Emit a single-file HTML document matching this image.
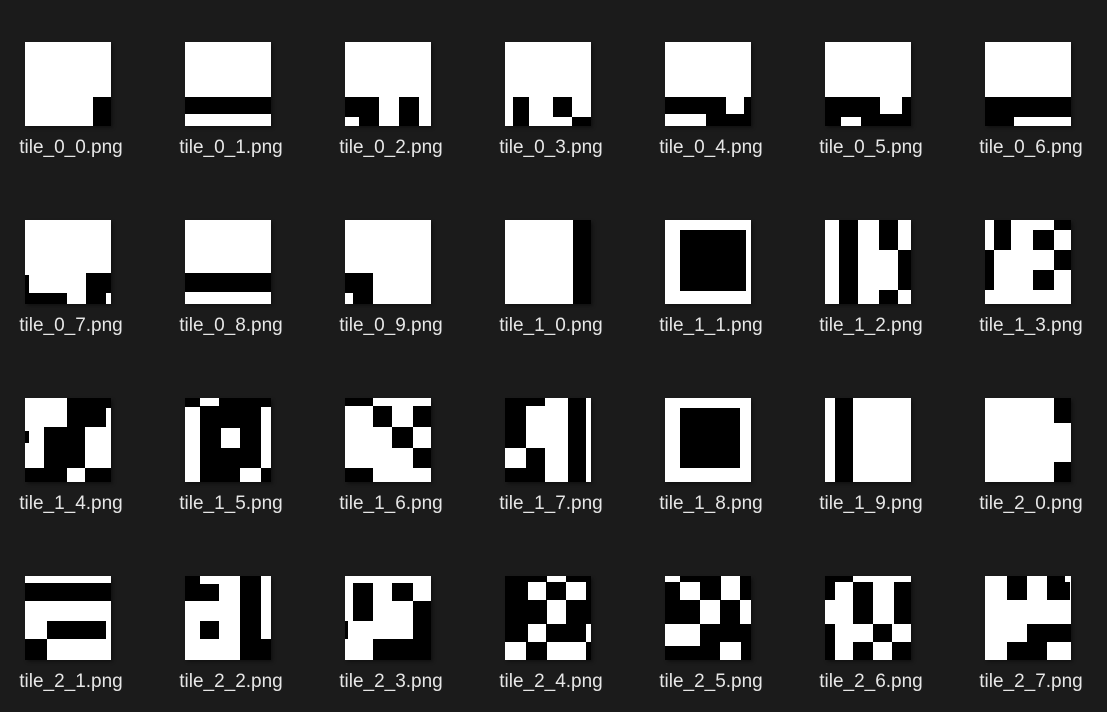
<!DOCTYPE html>
<html><head><meta charset="utf-8"><style>
html,body{margin:0;padding:0;background:#1b1b1b;width:1107px;height:712px;overflow:hidden;position:relative}
svg{position:absolute;width:86px;height:84px;box-shadow:2px 2px 3px rgba(0,0,0,.35)}
.l{position:absolute;width:160px;text-align:center;color:#e6e6e6;font:19px "Liberation Sans",sans-serif;line-height:22px;margin-left:3px;margin-top:1px}
</style></head><body>
<!-- Row 0 -->
<svg style="left:25px;top:42px" viewBox="0 0 86 84"><rect width="86" height="84" fill="#fff"/><rect x="68" y="55" width="18" height="29"/></svg>
<svg style="left:185px;top:42px" viewBox="0 0 86 84"><rect width="86" height="84" fill="#fff"/><rect x="0" y="55" width="86" height="17"/></svg>
<svg style="left:345px;top:42px" viewBox="0 0 86 84"><rect width="86" height="84" fill="#fff"/><rect x="0" y="55" width="34" height="29"/><rect x="0" y="75" width="14" height="9" fill="#fff"/><rect x="54" y="55" width="20" height="29"/></svg>
<svg style="left:505px;top:42px" viewBox="0 0 86 84"><rect width="86" height="84" fill="#fff"/><rect x="8" y="55" width="16" height="29"/><rect x="48" y="55" width="19" height="20"/><rect x="67" y="75" width="19" height="9"/></svg>
<svg style="left:665px;top:42px" viewBox="0 0 86 84"><rect width="86" height="84" fill="#fff"/><rect x="0" y="55" width="86" height="29"/><rect x="0" y="72" width="41" height="12" fill="#fff"/><rect x="61" y="55" width="18" height="17" fill="#fff"/></svg>
<svg style="left:825px;top:42px" viewBox="0 0 86 84"><rect width="86" height="84" fill="#fff"/><rect x="0" y="55" width="86" height="29"/><rect x="55" y="55" width="22" height="17" fill="#fff"/><rect x="16" y="75" width="20" height="9" fill="#fff"/></svg>
<svg style="left:985px;top:42px" viewBox="0 0 86 84"><rect width="86" height="84" fill="#fff"/><rect x="0" y="55" width="86" height="29"/><rect x="29" y="75" width="57" height="9" fill="#fff"/></svg>
<div class="l" style="left:-12px;top:136px">tile_0_0.png</div>
<div class="l" style="left:148px;top:136px">tile_0_1.png</div>
<div class="l" style="left:308px;top:136px">tile_0_2.png</div>
<div class="l" style="left:468px;top:136px">tile_0_3.png</div>
<div class="l" style="left:628px;top:136px">tile_0_4.png</div>
<div class="l" style="left:788px;top:136px">tile_0_5.png</div>
<div class="l" style="left:948px;top:136px">tile_0_6.png</div>
<!-- Row 1 -->
<svg style="left:25px;top:220px" viewBox="0 0 86 84"><rect width="86" height="84" fill="#fff"/><rect x="0" y="73" width="42" height="11"/><rect x="0" y="55" width="4" height="18"/><rect x="61" y="53" width="25" height="31"/><rect x="81" y="73" width="5" height="11" fill="#fff"/></svg>
<svg style="left:185px;top:220px" viewBox="0 0 86 84"><rect width="86" height="84" fill="#fff"/><rect x="0" y="53" width="86" height="19"/></svg>
<svg style="left:345px;top:220px" viewBox="0 0 86 84"><rect width="86" height="84" fill="#fff"/><rect x="0" y="53" width="28" height="31"/><rect x="0" y="73" width="8" height="11" fill="#fff"/></svg>
<svg style="left:505px;top:220px" viewBox="0 0 86 84"><rect width="86" height="84" fill="#fff"/><rect x="68" y="0" width="18" height="84"/></svg>
<svg style="left:665px;top:220px" viewBox="0 0 86 84"><rect width="86" height="84" fill="#fff"/><rect x="15" y="10" width="66" height="61"/></svg>
<svg style="left:825px;top:220px" viewBox="0 0 86 84"><rect width="86" height="84" fill="#fff"/><rect x="14" y="0" width="19" height="84"/><rect x="54" y="0" width="19" height="30"/><rect x="73" y="30" width="13" height="40"/><rect x="54" y="70" width="19" height="14"/></svg>
<svg style="left:985px;top:220px" viewBox="0 0 86 84"><rect width="86" height="84" fill="#fff"/><rect x="9" y="0" width="17" height="30"/><rect x="0" y="30" width="9" height="40"/><rect x="48" y="10" width="21" height="20"/><rect x="48" y="50" width="21" height="20"/><rect x="69" y="0" width="17" height="10"/><rect x="69" y="30" width="17" height="20"/></svg>
<div class="l" style="left:-12px;top:314px">tile_0_7.png</div>
<div class="l" style="left:148px;top:314px">tile_0_8.png</div>
<div class="l" style="left:308px;top:314px">tile_0_9.png</div>
<div class="l" style="left:468px;top:314px">tile_1_0.png</div>
<div class="l" style="left:628px;top:314px">tile_1_1.png</div>
<div class="l" style="left:788px;top:314px">tile_1_2.png</div>
<div class="l" style="left:948px;top:314px">tile_1_3.png</div>
<!-- Row 2 -->
<svg style="left:25px;top:398px" viewBox="0 0 86 84"><rect width="86" height="84" fill="#fff"/><rect x="42" y="0" width="44" height="29"/><rect x="81" y="10" width="5" height="19" fill="#fff"/><rect x="19" y="29" width="41" height="41"/><rect x="0" y="70" width="42" height="14"/><rect x="60" y="70" width="26" height="14"/><rect x="0" y="33" width="4" height="12"/></svg>
<svg style="left:185px;top:398px" viewBox="0 0 86 84"><rect width="86" height="84"/><rect x="15" y="0" width="19" height="8" fill="#fff"/><rect x="0" y="9" width="15" height="75" fill="#fff"/><rect x="76" y="9" width="10" height="61" fill="#fff"/><rect x="36" y="30" width="19" height="20" fill="#fff"/><rect x="55" y="70" width="21" height="14" fill="#fff"/></svg>
<svg style="left:345px;top:398px" viewBox="0 0 86 84"><rect width="86" height="84" fill="#fff"/><rect x="0" y="0" width="28" height="8"/><rect x="28" y="8" width="19" height="21"/><rect x="68" y="8" width="18" height="21"/><rect x="47" y="29" width="21" height="21"/><rect x="68" y="50" width="18" height="20"/><rect x="0" y="70" width="28" height="14"/></svg>
<svg style="left:505px;top:398px" viewBox="0 0 86 84"><rect width="86" height="84" fill="#fff"/><rect x="0" y="0" width="40" height="8"/><rect x="0" y="8" width="21" height="42"/><rect x="21" y="50" width="19" height="34"/><rect x="0" y="70" width="40" height="14"/><rect x="63" y="0" width="18" height="84"/></svg>
<svg style="left:665px;top:398px" viewBox="0 0 86 84"><rect width="86" height="84" fill="#fff"/><rect x="15" y="10" width="60" height="60"/></svg>
<svg style="left:825px;top:398px" viewBox="0 0 86 84"><rect width="86" height="84" fill="#fff"/><rect x="10" y="0" width="18" height="84"/></svg>
<svg style="left:985px;top:398px" viewBox="0 0 86 84"><rect width="86" height="84" fill="#fff"/><rect x="69" y="0" width="17" height="25"/><rect x="69" y="64" width="17" height="20"/></svg>
<div class="l" style="left:-12px;top:492px">tile_1_4.png</div>
<div class="l" style="left:148px;top:492px">tile_1_5.png</div>
<div class="l" style="left:308px;top:492px">tile_1_6.png</div>
<div class="l" style="left:468px;top:492px">tile_1_7.png</div>
<div class="l" style="left:628px;top:492px">tile_1_8.png</div>
<div class="l" style="left:788px;top:492px">tile_1_9.png</div>
<div class="l" style="left:948px;top:492px">tile_2_0.png</div>
<!-- Row 3 -->
<svg style="left:25px;top:576px" viewBox="0 0 86 84"><rect width="86" height="84" fill="#fff"/><rect x="0" y="7" width="86" height="18"/><rect x="22" y="45" width="59" height="18"/><rect x="0" y="63" width="22" height="21"/></svg>
<svg style="left:185px;top:576px" viewBox="0 0 86 84"><rect width="86" height="84" fill="#fff"/><rect x="0" y="0" width="15" height="8"/><rect x="0" y="8" width="34" height="17"/><rect x="15" y="45" width="19" height="18"/><rect x="55" y="0" width="21" height="84"/><rect x="76" y="63" width="10" height="21"/></svg>
<svg style="left:345px;top:576px" viewBox="0 0 86 84"><rect width="86" height="84" fill="#fff"/><rect x="8" y="7" width="20" height="38"/><rect x="47" y="7" width="21" height="18"/><rect x="68" y="25" width="18" height="59"/><rect x="28" y="63" width="58" height="21"/><rect x="0" y="45" width="3" height="18"/></svg>
<svg style="left:505px;top:576px" viewBox="0 0 86 84"><rect width="86" height="84"/><g fill="#fff"><rect x="42" y="0" width="19" height="6"/><rect x="23" y="6" width="18" height="18"/><rect x="61" y="6" width="20" height="18"/><rect x="42" y="24" width="19" height="24"/><rect x="23" y="48" width="18" height="18"/><rect x="81" y="48" width="5" height="18"/><rect x="0" y="66" width="21" height="18"/><rect x="42" y="66" width="39" height="18"/></g></svg>
<svg style="left:665px;top:576px" viewBox="0 0 86 84"><rect width="86" height="84"/><g fill="#fff"><rect x="0" y="0" width="15" height="6"/><rect x="15" y="6" width="20" height="18"/><rect x="56" y="0" width="19" height="24"/><rect x="35" y="24" width="20" height="24"/><rect x="75" y="24" width="11" height="24"/><rect x="0" y="48" width="35" height="22"/><rect x="55" y="66" width="21" height="18"/></g></svg>
<svg style="left:825px;top:576px" viewBox="0 0 86 84"><rect width="86" height="84" fill="#fff"/><rect x="0" y="0" width="28" height="6"/><rect x="0" y="6" width="10" height="18"/><rect x="28" y="6" width="20" height="42"/><rect x="69" y="6" width="17" height="42"/><rect x="48" y="48" width="19" height="18"/><rect x="0" y="48" width="10" height="36"/><rect x="28" y="66" width="20" height="18"/><rect x="67" y="66" width="19" height="18"/></svg>
<svg style="left:985px;top:576px" viewBox="0 0 86 84"><rect width="86" height="84" fill="#fff"/><rect x="22" y="0" width="20" height="24"/><rect x="62" y="0" width="23" height="24"/><rect x="80" y="0" width="6" height="6" fill="#fff"/><rect x="42" y="48" width="44" height="18"/><rect x="22" y="66" width="40" height="18"/></svg>
<div class="l" style="left:-12px;top:670px">tile_2_1.png</div>
<div class="l" style="left:148px;top:670px">tile_2_2.png</div>
<div class="l" style="left:308px;top:670px">tile_2_3.png</div>
<div class="l" style="left:468px;top:670px">tile_2_4.png</div>
<div class="l" style="left:628px;top:670px">tile_2_5.png</div>
<div class="l" style="left:788px;top:670px">tile_2_6.png</div>
<div class="l" style="left:948px;top:670px">tile_2_7.png</div>
</body></html>
